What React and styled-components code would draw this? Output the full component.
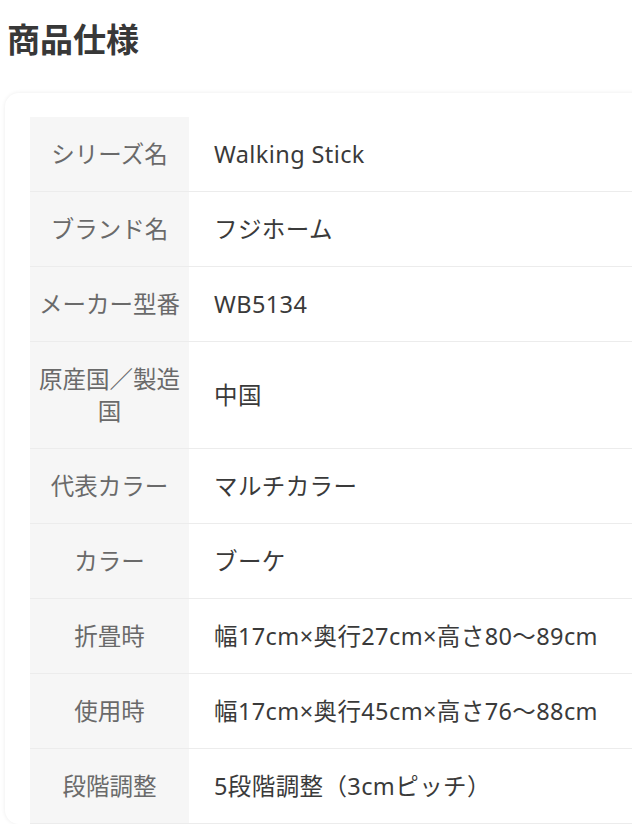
import React from 'react';
import styled, { createGlobalStyle } from 'styled-components';

const specs = [
  { label: 'シリーズ名', value: 'Walking Stick' },
  { label: 'ブランド名', value: 'フジホーム' },
  { label: 'メーカー型番', value: 'WB5134' },
  { label: '原産国／製造国', value: '中国' },
  { label: '代表カラー', value: 'マルチカラー' },
  { label: 'カラー', value: 'ブーケ' },
  { label: '折畳時', value: '幅17cm×奥行27cm×高さ80〜89cm' },
  { label: '使用時', value: '幅17cm×奥行45cm×高さ76〜88cm' },
  { label: '段階調整', value: '5段階調整（3cmピッチ）' },
];

const GlobalStyle = createGlobalStyle`
  html, body {
    margin: 0;
    padding: 0;
    background: #fff;
    overflow: hidden;
  }
  body {
    font-family: "Noto Sans", "Noto Sans CJK JP", sans-serif;
    color: #333;
  }
`;

const Page = styled.div`
  width: 632px;
  height: 824px;
  overflow: hidden;
`;

const Title = styled.h2`
  margin: 0;
  padding: 16px 0 0 7px;
  font-family: "Noto Sans CJK JP", sans-serif;
  font-size: 33px;
  line-height: 44px;
  font-weight: 700;
  color: #383838;
`;

const Card = styled.div`
  margin: 33px -40px 0 5px;
  padding: 24px 0 0 25px;
  background: #fff;
  border-radius: 14px;
  box-shadow: 0 0 4px rgba(0, 0, 0, 0.08);
`;

const Table = styled.table`
  border-collapse: collapse;
  width: 100%;
  font-size: 23.5px;
  line-height: 32px;
`;

const Row = styled.tr`
  border-bottom: 1px solid #ececec;
`;

const Label = styled.th`
  width: 159px;
  box-sizing: border-box;
  padding: 21px 7px;
  background: #f6f6f6;
  color: #6a6a6a;
  font-weight: 400;
  text-align: center;
  vertical-align: middle;
`;

const Value = styled.td`
  padding: 21px 0 21px 25px;
  color: #3a3a3a;
  letter-spacing: 0.4px;
  text-align: left;
  vertical-align: middle;
  white-space: nowrap;
`;

export default function App() {
  return (
    <Page>
      <GlobalStyle />
      <Title>商品仕様</Title>
      <Card>
        <Table>
          <tbody>
            {specs.map((s) => (
              <Row key={s.label}>
                <Label>{s.label}</Label>
                <Value>{s.value}</Value>
              </Row>
            ))}
          </tbody>
        </Table>
      </Card>
    </Page>
  );
}
